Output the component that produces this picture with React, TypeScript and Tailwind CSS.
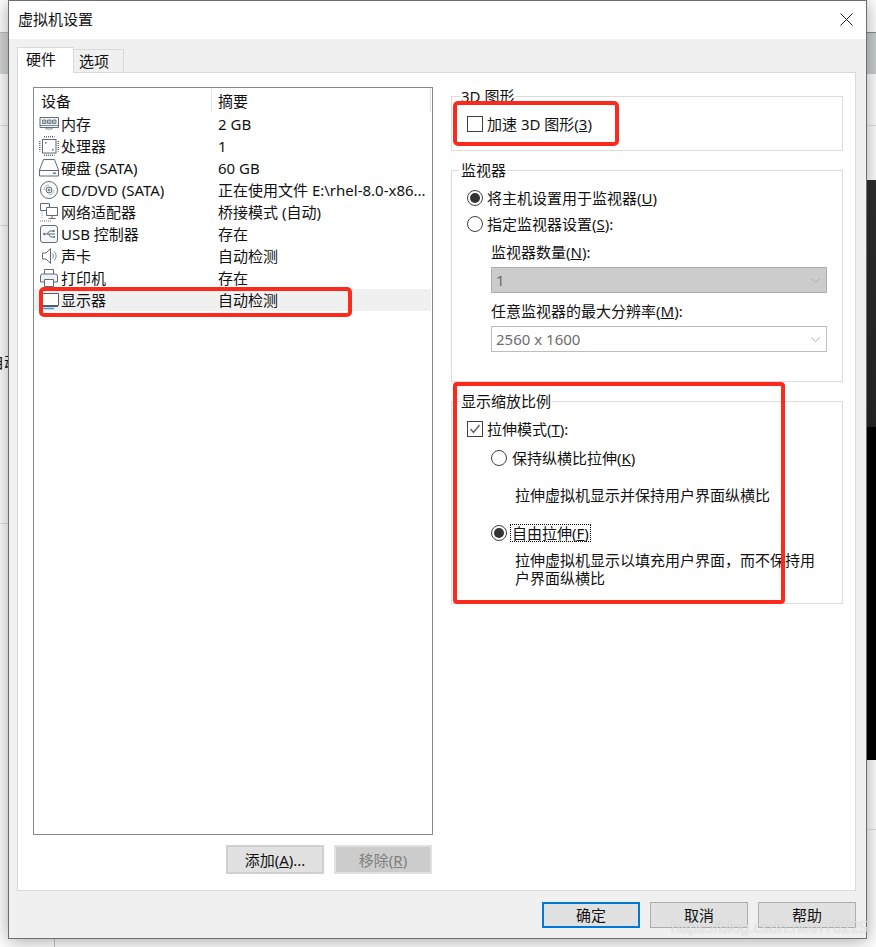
import type { ReactNode } from "react";

const S = "#5d6c78";

const icons: Record<string, ReactNode> = {
  mem: (
    <>
      <path d="M1 3.500h18.500v10H1z" fill="#f4f5f6" stroke={S} />
      <path d="M3.500 6h3.500v3.500H3.500zM8.500 6H12v3.500H8.500zM13.500 6H17v3.500h-3.500z" fill="#b9c2c9" stroke={S} strokeWidth="0.8" />
      <path d="M1 11.500h18.500M7 13.500v1.500h6v-1.500" fill="none" stroke={S} strokeWidth="0.8" />
    </>
  ),
  cpu: (
    <>
      <rect x="3.500" y="3.500" width="13.500" height="13.500" fill="#fff" stroke={S} />
      <path d="M5 .5h10.500M5 19.500h10.500M.5 5v10.500M19.500 5v10.500" stroke={S} strokeWidth="2" strokeDasharray="1 1" fill="none" />
      <rect x="6" y="6" width="1.500" height="1.500" fill={S} />
      <rect x="13" y="13" width="1.500" height="1.500" fill={S} />
    </>
  ),
  hdd: (
    <>
      <path d="M.5 12 4.500 1.500h11l4 10.500v6H.5z" fill="#fff" stroke={S} />
      <path d="M.5 12.500h19" stroke={S} />
      <rect x="14" y="14.500" width="3" height="1.400" fill={S} />
    </>
  ),
  cd: (
    <>
      <circle cx="10" cy="10" r="8.500" fill="#fff" stroke={S} />
      <circle cx="10" cy="10" r="3" fill="#dfe3e6" stroke={S} />
      <circle cx="10" cy="10" r="1" fill={S} />
      <path d="M5 10a5 5 0 0 1 5-5M15 10a5 5 0 0 1-5 5" stroke="#aab4bb" fill="none" />
    </>
  ),
  net: (
    <>
      <path d="M1.500 1.500h9v7h-9z" fill="#fff" stroke={S} />
      <path d="M7.500 5.500h11v8h-11z" fill="#fff" stroke={S} />
      <path d="M13 13.500v2.500M9.500 16.500h7" stroke={S} fill="none" />
      <path d="M1 19h12" stroke="#9aa5ad" strokeWidth="1.500" strokeDasharray="1 1" fill="none" />
      <path d="M3 9v8" stroke="#9aa5ad" strokeDasharray="1 1" fill="none" />
    </>
  ),
  usb: (
    <>
      <rect x="1.500" y="1.500" width="17" height="17" rx="2.500" fill="#f6f7f8" stroke={S} />
      <path d="M4 10h12M8 10l2.500-3h3M9.500 10l2 3h2.500" stroke={S} fill="none" />
      <path d="M4 10l2-1.500v3z" fill={S} />
      <rect x="13.500" y="6" width="2" height="2" fill={S} />
      <circle cx="15" cy="13" r="1" fill={S} />
    </>
  ),
  sound: (
    <>
      <path d="M3.500 7H7l4.500-4.500v15L7 13H3.500z" fill="#fff" stroke={S} />
      <path d="M13.500 7.500a4 4 0 0 1 0 5M15.500 5.500a7 7 0 0 1 0 9" stroke="#7f8c96" fill="none" />
    </>
  ),
  printer: (
    <>
      <path d="M5.500 6V1.500h9V6" fill="#fff" stroke={S} />
      <path d="M1.500 14V8a2 2 0 0 1 2-2h13a2 2 0 0 1 2 2v6h-4" fill="#eef0f1" stroke={S} />
      <path d="M1.500 14h4" stroke={S} />
      <path d="M5.500 11.500h9v7h-9z" fill="#fff" stroke={S} />
    </>
  ),
  display: (
    <>
      <path d="M3.500 3.500h16v12h-16z" fill="#fff" stroke="#4e5d69" />
      <path d="M4 16.500h15" stroke="#4e5d69" />
      <path d="M3 18.500h12" stroke="#4a9bc9" strokeWidth="1.500" />
    </>
  ),
};

function DevIcon({ name }: { name: string }) {
  return (
    <svg viewBox="0 0 20 20" width="20" height="20" className="shrink-0">
      {icons[name]}
    </svg>
  );
}

const rows = [
  ["mem", "内存", "2 GB"],
  ["cpu", "处理器", "1"],
  ["hdd", "硬盘 (SATA)", "60 GB"],
  ["cd", "CD/DVD (SATA)", "正在使用文件 E:\\rhel-8.0-x86..."],
  ["net", "网络适配器", "桥接模式 (自动)"],
  ["usb", "USB 控制器", "存在"],
  ["sound", "声卡", "自动检测"],
  ["printer", "打印机", "存在"],
  ["display", "显示器", "自动检测"],
];

function Radio({ on }: { on?: boolean }) {
  return (
    <span className="flex h-4 w-4 shrink-0 items-center justify-center rounded-full border border-[#3f3f3f] bg-white">
      {on && <span className="h-[10px] w-[10px] rounded-full bg-[#333333]" />}
    </span>
  );
}

function Check({ on }: { on?: boolean }) {
  return (
    <span className="flex h-4 w-4 shrink-0 items-center justify-center border border-[#3f3f3f] bg-white">
      {on && (
        <svg viewBox="0 0 14 14" width="14" height="14">
          <path d="M2.500 7l3 3.500 6-7.500" fill="none" stroke="#5a5a5a" strokeWidth="1.300" />
        </svg>
      )}
    </span>
  );
}

function Chevron({ color }: { color: string }) {
  return (
    <svg viewBox="0 0 12 8" width="11" height="7" className="shrink-0">
      <path d="M1 1.500l5 5 5-5" fill="none" stroke={color} />
    </svg>
  );
}

function Group({ title, className, children }: { title: string; className: string; children: ReactNode }) {
  return (
    <fieldset className={`border border-[#dcdcdc] ${className}`}>
      <legend className="ml-[8px] h-5 px-px leading-5">{title}</legend>
      {children}
    </fieldset>
  );
}

function Row({ className, children }: { className?: string; children: ReactNode }) {
  return <div className={`flex h-5 items-center leading-5 ${className ?? ""}`}>{children}</div>;
}

function Btn({ children, className }: { children: ReactNode; className: string }) {
  return (
    <button className={`flex w-[98px] items-center justify-center border-solid leading-5 ${className}`}>{children}</button>
  );
}

export default function App() {
  return (
    <div className="relative h-[947px] w-[876px] overflow-hidden bg-white font-['Noto_Sans','Noto_Sans_CJK_SC',sans-serif] text-[15px] text-[#111111]">
      <div className="flex h-full justify-between">
        <div className="flex w-[60px] flex-col">
          <div className="h-[33px] border-b border-[#bdbdbd] bg-white" />
          <div className="h-[41px] bg-[#d4d7d9]" />
          <div className="h-[52px] border-b border-[#e2e2e2]" />
          <div className="h-[100px] border-b border-[#e2e2e2]" />
          <div className="flex h-[298px] items-end border-b border-[#e2e2e2] pb-[153px]">
            <span className="ml-[-11px] whitespace-nowrap leading-none">自动</span>
          </div>
          <div className="flex-1" />
          <div className="ml-[54px] h-[9px] w-px bg-[#c8c8c8]" />
        </div>
        <div className="flex w-[60px] flex-col">
          <div className="h-[33px] border-b border-[#8b8b8b] bg-white" />
          <div className="h-[41px] bg-[#c9ced1]" />
          <div className="h-[52px] border-b border-[#e2e2e2]" />
          <div className="h-[54px]" />
          <div className="h-[247px] bg-gradient-to-b from-[#2f2f2f] to-[#262626]" />
          <div className="h-[333px] bg-black" />
          <div className="h-[70px] border-b border-[#e2e2e2]" />
        </div>
      </div>

      <div className="absolute left-2 top-0 flex h-[939px] w-[859px] flex-col border border-[#6e6e6e] bg-[#f0f0f0] shadow-[0_2px_18px_rgba(0,0,0,0.35)]">
        <div className="flex h-[38px] shrink-0 items-center justify-between bg-white pb-[2px] pl-[9px] pr-[13px]">
          <span className="text-[15px] leading-5">虚拟机设置</span>
          <svg viewBox="0 0 13 13" width="13" height="13">
            <path d="M.5.5l12 12M12.500.5l-12 12" stroke="#222222" fill="none" />
          </svg>
        </div>

        <div className="ml-2 mt-2 flex h-[25px] items-end">
          <div className="relative z-10 -mb-px flex h-[26px] w-[57px] items-start border border-b-0 border-[#d9d9d9] bg-white pl-2 pt-[1px] leading-5">
            硬件
          </div>
          <div className="flex h-[23px] w-[50px] items-center border-r border-t border-[#d9d9d9] pl-[5px] leading-5">选项</div>
        </div>

        <div className="ml-2 mr-[10px] flex h-[819px] shrink-0 gap-[18px] border border-[#d9d9d9] bg-white pl-[15px] pt-[14px]">
          <div className="flex w-[400px] flex-col">
            <div className="h-[748px] border border-[#85888c] bg-white">
              <div className="flex h-[25px] items-start pr-px">
                <div className="h-[24px] w-[178px] border-r border-[#e3e3e3] pl-[7px] leading-[26px]">设备</div>
                <div className="h-[24px] flex-1 border-r border-[#e3e3e3] pl-[6px] leading-[26px]">摘要</div>
              </div>
              {rows.map(([icon, name, val], i) => (
                <div
                  key={name}
                  className={`mr-px flex h-[22px] items-center whitespace-nowrap pl-[5px] leading-5 ${i === 8 ? "bg-[#f0f0f0]" : ""}`}
                >
                  <DevIcon name={icon} />
                  <span className="ml-[2px] w-[157px]">{name}</span>
                  <span>{val}</span>
                </div>
              ))}
            </div>
            <div className="mt-[10px] flex justify-end gap-[10px] pr-px">
              <Btn className="h-[29px] border-2 border-[#d0d0d0] bg-[#e1e1e1]">
                <span>添加(<u>A</u>)...</span>
              </Btn>
              <Btn className="h-[29px] border-2 border-[#e0e0e0] bg-[#cccccc] text-[#7f7f7f]">
                <span>移除(<u>R</u>)</span>
              </Btn>
            </div>
          </div>

          <div className="-mt-px flex w-[392px] flex-col">
            <Group title="3D 图形" className="h-[65px]">
              <Row className="mt-2 gap-1 pl-[15px]">
                <Check />
                <span>加速 3D 图形(<u>3</u>)</span>
              </Row>
            </Group>

            <Group title="监视器" className="mt-[9px] h-[222px]">
              <Row className="mt-2 gap-1 pl-[15px]">
                <Radio on />
                <span>将主机设置用于监视器(<u>U</u>)</span>
              </Row>
              <Row className="mt-[6px] gap-1 pl-[15px]">
                <Radio />
                <span>指定监视器设置(<u>S</u>):</span>
              </Row>
              <div className="flex flex-col pl-[39px]">
                <Row className="mt-2">
                  <span>监视器数量(<u>N</u>):</span>
                </Row>
                <div className="mt-[5px] flex h-[26px] w-[336px] items-center justify-between border border-[#adadad] bg-[#cccccc] pl-[4px] pr-[5px] text-[#6d6d6d]">
                  <span>1</span>
                  <Chevron color="#a8a8a8" />
                </div>
                <Row className="mt-2">
                  <span>任意监视器的最大分辨率(<u>M</u>):</span>
                </Row>
                <div className="mt-[5px] flex h-[26px] w-[336px] items-center justify-between border border-[#bdbdbd] bg-white pl-[4px] pr-[5px] text-[#6d6d6d]">
                  <span>2560 x 1600</span>
                  <Chevron color="#a0a0a0" />
                </div>
              </div>
            </Group>

            <Group title="显示缩放比例" className="mt-[9px] h-[213px]">
              <Row className="mt-2 gap-1 pl-[15px]">
                <Check on />
                <span>拉伸模式(<u>T</u>):</span>
              </Row>
              <Row className="mt-[9px] pl-[39px]">
                <Radio />
                <span className="ml-[3px] border border-transparent px-px">保持纵横比拉伸(<u>K</u>)</span>
              </Row>
              <div className="ml-[63px] mt-[17px] h-5 leading-5">拉伸虚拟机显示并保持用户界面纵横比</div>
              <Row className="mt-[18px] pl-[39px]">
                <Radio on />
                <span className="ml-[3px] border border-dotted border-black px-px leading-[16px]">自由拉伸(<u>F</u>)</span>
              </Row>
              <div className="ml-[63px] mt-2 w-[302px] leading-[18px]">拉伸虚拟机显示以填充用户界面，而不保持用户界面纵横比</div>
            </Group>
          </div>
        </div>

        <div className="mt-[11px] flex justify-end gap-[10px] pr-[10px]">
          <Btn className="h-[26px] border-2 border-[#0078d7] bg-[#e1e1e1]">确定</Btn>
          <Btn className="h-[26px] border border-[#adadad] bg-[#e1e1e1]">取消</Btn>
          <Btn className="h-[26px] border border-[#adadad] bg-[#e1e1e1]">帮助</Btn>
        </div>
      </div>

      <div className="absolute left-[39px] top-[287px] h-[30px] w-[313px] rounded-[5px] border-[4px] border-[#fb2a1c]" />
      <div className="absolute left-[453px] top-[101px] h-[45px] w-[166px] rounded-[5px] border-[4px] border-[#fb2a1c]" />
      <div className="absolute left-[453px] top-[382px] h-[222px] w-[332px] rounded-[4px] border-[4px] border-[#fb2a1c]" />

      <div className="absolute left-[671px] top-[918px] whitespace-nowrap font-['Liberation_Sans',sans-serif] text-[16px] leading-5 text-white/70 [text-shadow:0_0_1px_rgba(0,0,0,0.25)]">
        https://blog.csdn.net/IT0225
      </div>
    </div>
  );
}
